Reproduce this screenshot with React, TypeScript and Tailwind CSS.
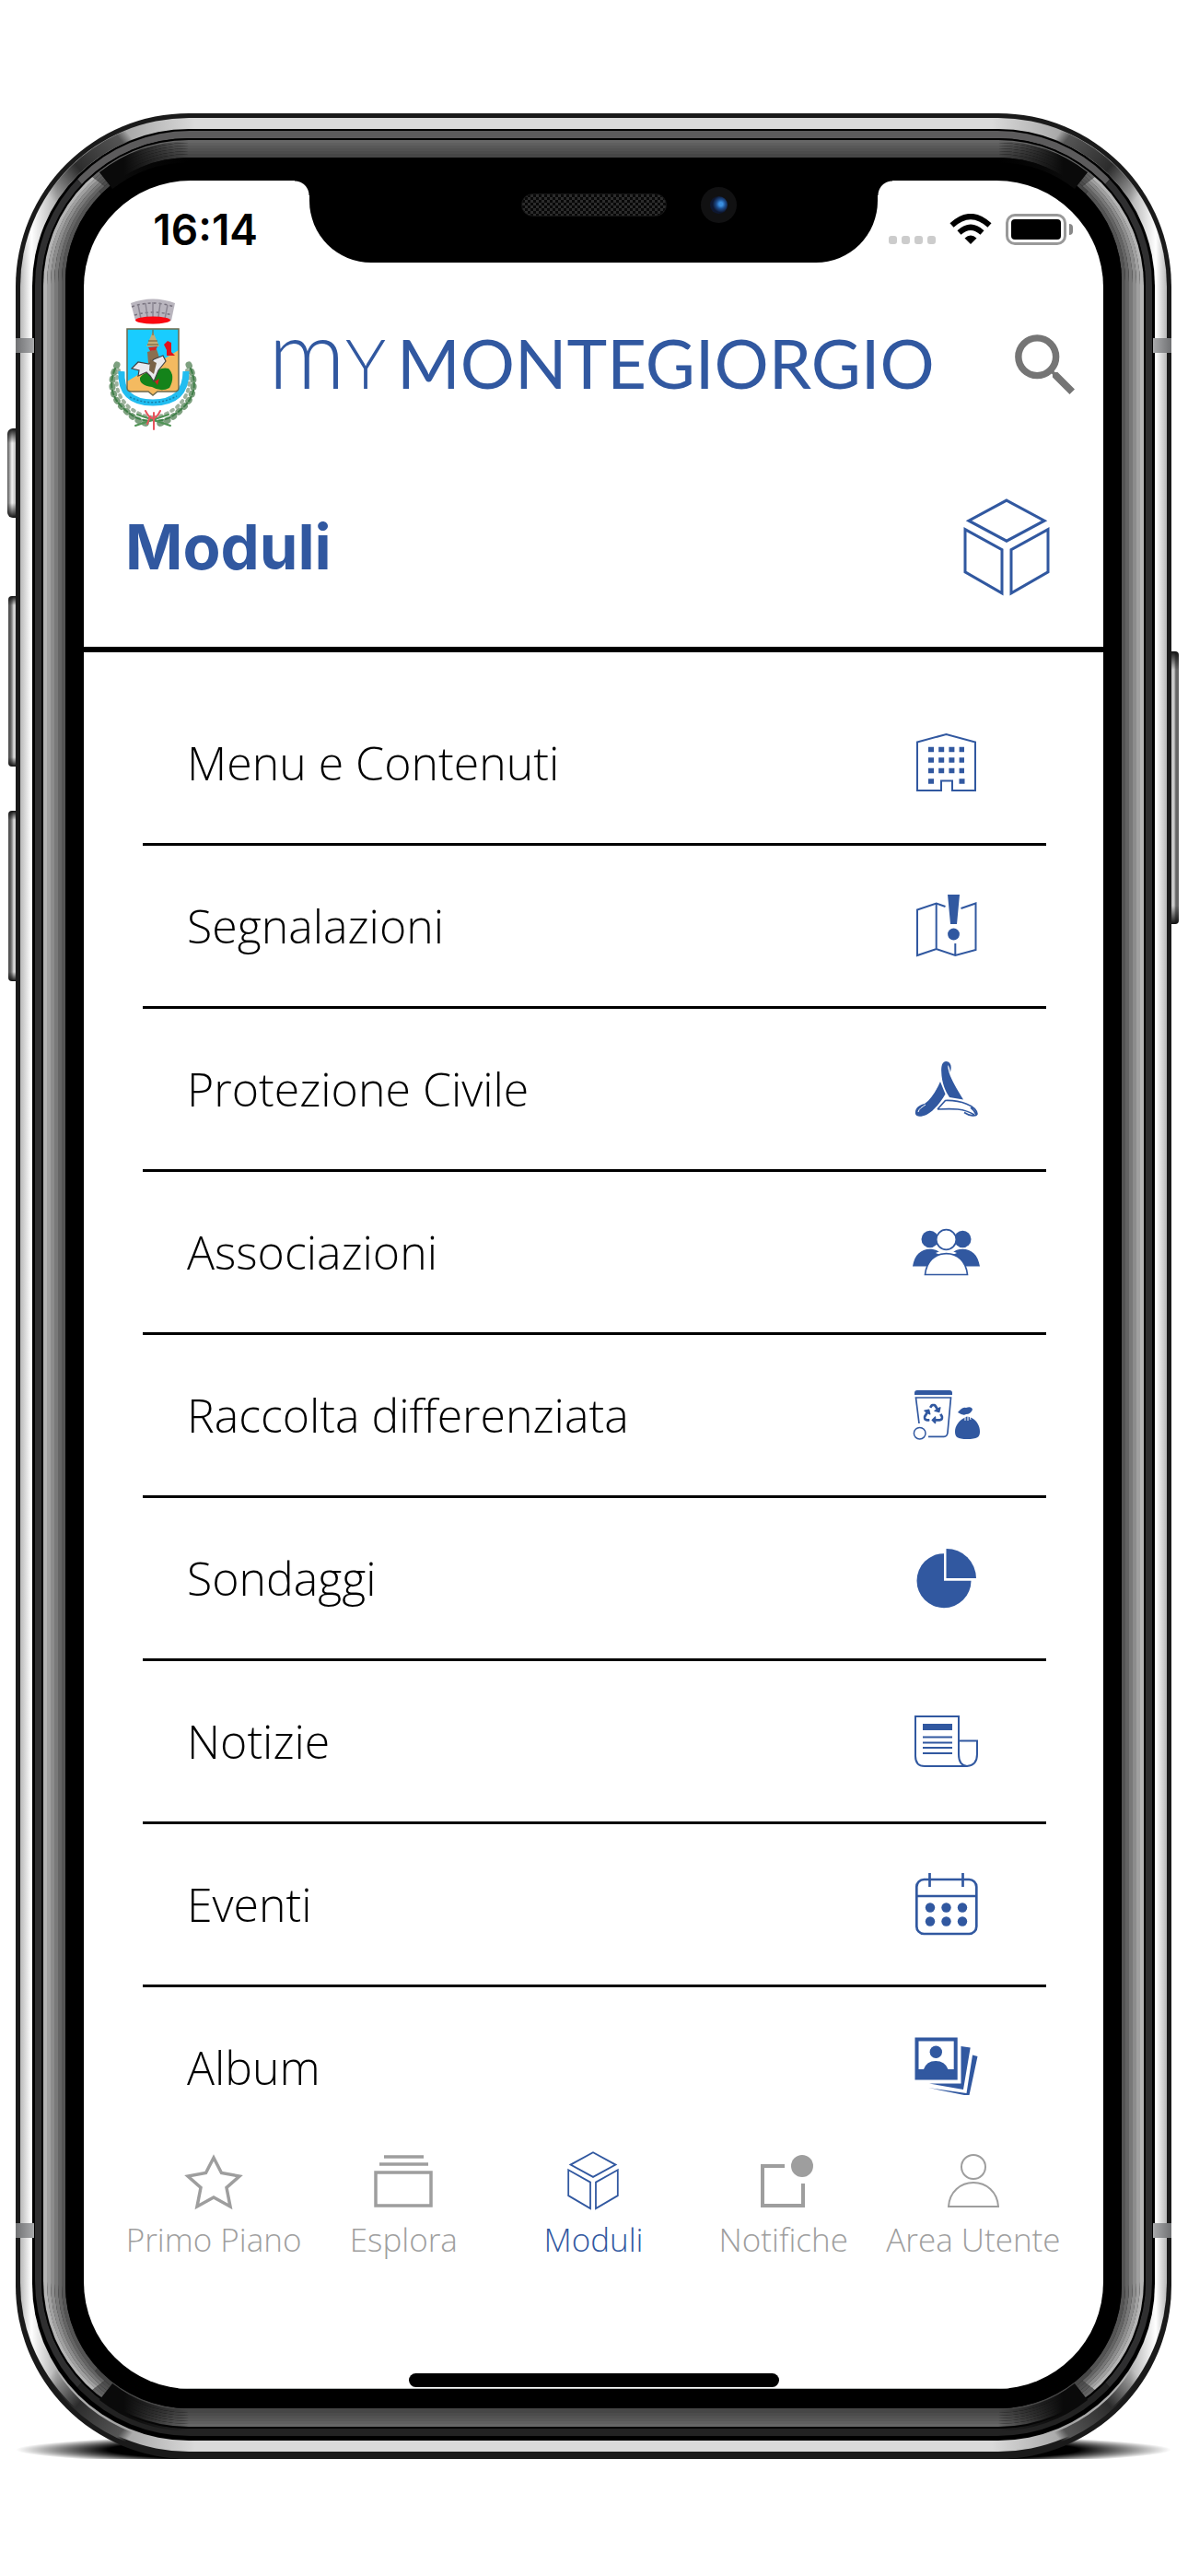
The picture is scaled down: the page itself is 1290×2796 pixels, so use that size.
import {useState} from "react";
import type {ReactNode} from "react";
import {MdSearch} from "react-icons/md";
import {FaRecycle} from "react-icons/fa";

// metal rings of the phone body, from the outside in
const RINGS=[
  "rounded-[188px] bg-[#1a1a1a] px-[5px] pt-[5px] pb-2",
  "rounded-[183px] bg-[linear-gradient(to_right,#b8b8b8,#fff_12px,#b0b0b0_40px,#a4a4a4_110px,#dadada_190px,#dadada_calc(100%-190px),#a4a4a4_calc(100%-110px),#b0b0b0_calc(100%-40px),#fff_calc(100%-12px),#b8b8b8)] px-[13px] py-3",
  "rounded-[170px] bg-black px-[3px] pt-[2px] pb-[5px]",
  "rounded-[168px] border-x-[7px] border-y-8 border-x-[#2f2f30] border-t-[#5c5b5c] border-b-[#222222]",
  "rounded-[160px] bg-black p-[2px]",
  "rounded-[158px] border-x-4 border-y-[3px] border-x-[#b4b4b4] border-y-[#666666]",
  "rounded-[154px] border-x-4 border-y-[3px] border-x-[#a0a0a0] border-y-[#5f5f5f]",
  "rounded-[150px] border-x-4 border-y-[3px] border-x-[#8c8c8c] border-y-[#585858]",
  "rounded-[146px] border-x-4 border-y-[3px] border-x-[#787878] border-y-[#525252]",
  "rounded-[142px] border-x-4 border-y-[3px] border-x-[#646464] border-y-[#4c4c4c]",
  "rounded-[138px] border-x-4 border-t-4 border-b-[5px] border-x-[#545454] border-y-[#464646]",
  "rounded-[134px] bg-black px-5 pt-[25px] pb-[21px]",
];

function CubeIcon({className, thick}: {className: string; thick: number}) {
  return (
    <svg viewBox="0 1 94 101" preserveAspectRatio="none" fill="none" stroke="currentColor" strokeWidth={thick} className={className}>
      <path d="M47 3 88 24 47 45 6 24zM2 33 42 54V99L2 77zM92 33 52 54V99L92 77z" />
    </svg>
  );
}

function ModuleIcon({children}: {children: ReactNode}) {
  return (
    <svg viewBox="0 0 72 72" fill="none" stroke="currentColor" strokeWidth="2" className="size-[72px] shrink-0 overflow-visible text-[#3158a0]">
      {children}
    </svg>
  );
}

const MODULES=[
  {
    name: "Menu e Contenuti",
    icon: (
      <>
        <path d="M4 13.5 35.5 5 67 13.5V66H42V55.5H30V66H4z" />
        <path d="M16 21.5h39M16 33h39M16 44.5h39" strokeWidth="5.5" strokeDasharray="6 5.2" />
        <path d="M16 56h6M49.5 56h6" strokeWidth="5.5" />
      </>
    ),
  },
  {
    name: "Segnalazioni",
    icon: (
      <>
        <path d="M34.5 15 24.7 11.5 4 18.5V68L24.7 61 45.3 68 67.5 62V11.5L51.5 17M24.7 11.5V61M45.3 55V68" />
        <path d="M37 2H50L47 34H40z" fill="currentColor" stroke="none" />
        <circle cx="43.5" cy="45" r="6.4" fill="currentColor" stroke="none" />
      </>
    ),
  },
  {
    name: "Protezione Civile",
    icon: (
      <>
        <path d="M35.5 6C31 6 30 11 30.2 17 30.5 30 35 39 39 45L54 47.5C47 36 41.5 27 38.5 18 37.5 14 37 12 37.3 10 39 12 39.5 15 39.8 18 41.5 13 41.5 7 35.5 6z" fill="currentColor" stroke="none" />
        <path d="M29 28 34.5 41.5C29 51 22 60 14 64 8 66.5 3 66.5 2 63 1 57 6 53.5 12 52 19 47 24 39 29 28z" fill="currentColor" stroke="none" />
        <path d="M5 61C6 57 9 56 13 53" stroke="white" strokeWidth="1" />
        <path d="M26 58 34.5 48.5C51 48 68 54 69 63 68 66 61 65.5 55 61.5M26 58C42 57 55 57 66 64M62 56C66 59 67 61 68 64" strokeWidth="1.7" />
      </>
    ),
  },
  {
    name: "Associazioni",
    icon: (
      <>
        <g fill="currentColor" stroke="none">
          <circle cx="17.7" cy="22" r="9.2" />
          <circle cx="53.3" cy="22" r="9.2" />
          <path d="M-1 51.5C1 39 8 32.7 17.7 32.7 27 32.7 34 38 36 51.5zM35 51.5C37 38 44 32.7 53.3 32.7 63 32.7 70 39 72 51.5z" />
        </g>
        <path d="M24 37Q35.5 30 47 37L40 40H31z" fill="white" stroke="none" />
        <circle cx="35.5" cy="22.5" r="10.8" fill="white" strokeWidth="1.7" />
        <path d="M12.5 60.5C14 46 23 37.7 35.5 37.7 48 37.7 57 46 58.5 60.5z" fill="white" strokeWidth="1.7" />
      </>
    ),
  },
  {
    name: "Raccolta differenziata",
    icon: (
      <>
        <path d="M1 14V12Q1 9 4 9H39Q42 9 42 12V14z" fill="currentColor" stroke="none" />
        <path d="M6 45 2.5 17H40.5L37 55Q36.5 59.3 33 59.3H16" strokeWidth="1.7" />
        <circle cx="6.7" cy="55.7" r="6.3" strokeWidth="1.5" />
        <FaRecycle x="10.5" y="23.5" size={22} stroke="none" />
        <path d="M48 33Q53 27 57 28 63 26 64 30 62 35 57 35 54 37 48 33zM55 39Q58 36 63 39C69 42 72 48 72 54 72 60 69 62 58 62 48 62 45 60 45 54 45 48 49 42 55 39z" fill="currentColor" stroke="none" />
        <path d="M56 42V37M59 42V36M62 41 61 37" stroke="white" strokeWidth="1" />
      </>
    ),
  },
  {
    name: "Sondaggi",
    icon: (
      <g fill="currentColor" stroke="none">
        <path d="M33 9.2V38.7H62.5A29.5 29.5 0 1 1 33 9.2z" />
        <path d="M35.5 4V36H68A32.3 32.3 0 0 0 35.5 4z" />
      </g>
    ),
  },
  {
    name: "Notizie",
    icon: (
      <>
        <path d="M49 35.5V9H2V52Q2 63 12 63H58Q69 62 69 50V35.5H49V50Q49 62 58 63" />
        <path d="M10 20.5H42" strokeWidth="7" />
        <path d="M10 31.5H42M10 37.5H42M10 43H42M10 49H42" />
      </>
    ),
  },
  {
    name: "Eventi",
    icon: (
      <>
        <rect x="3.3" y="9" width="65" height="59" rx="8" strokeWidth="2.7" />
        <path d="M3 27H68M17.5 2V17M53.5 2V17" strokeWidth="2.7" />
        <g fill="currentColor" stroke="none">
          <circle cx="18" cy="39.5" r="5.2" />
          <circle cx="35.5" cy="39.5" r="5.2" />
          <circle cx="53" cy="39.5" r="5.2" />
          <circle cx="18" cy="54.5" r="5.2" />
          <circle cx="35.5" cy="54.5" r="5.2" />
          <circle cx="53" cy="54.5" r="5.2" />
        </g>
      </>
    ),
  },
  {
    name: "Album",
    icon: (
      <g fill="currentColor" stroke="none">
        <path fillRule="evenodd" d="M1.5 3.5H47.7V49.5H1.5zM5.5 7.5V38H11Q14 29 24 29T37.5 38H43.7V7.5z" />
        <circle cx="24.3" cy="19.3" r="6.7" />
        <path d="M51.5 13 61.7 14.5 54 60 17 53.5H51.5z" />
        <path d="M64 22.5 69.5 24 60.5 66H55L16 58 57.5 64z" />
      </g>
    ),
  },
];

const TABS=[
  {
    name: "Primo Piano",
    icon: (
      <svg viewBox="0 0 64 64" fill="none" stroke="currentColor" strokeWidth="3.5" className="size-16">
        <path d="M32 7 40.5 23.5 60 27 46 39.5 50 60 32 50 14 60 18 39.5 4 27 23.5 23.5z" />
      </svg>
    ),
  },
  {
    name: "Esplora",
    icon: (
      <svg viewBox="0 0 64 64" fill="none" stroke="currentColor" strokeWidth="3.5" className="size-16">
        <path d="M11 6H54M6 14H59M2 23H62V59H2z" />
      </svg>
    ),
  },
  {name: "Moduli", icon: <CubeIcon className="h-16 w-14" thick={3} />},
  {
    name: "Notifiche",
    icon: (
      <svg viewBox="0 0 64 64" fill="none" stroke="currentColor" strokeWidth="4" className="size-16">
        <path d="M33 16H9V59H53V35" />
        <circle cx="52" cy="16" r="12" fill="currentColor" stroke="none" />
      </svg>
    ),
  },
  {
    name: "Area Utente",
    icon: (
      <svg viewBox="0 0 64 64" fill="none" stroke="currentColor" strokeWidth="2" className="size-16">
        <circle cx="32" cy="17" r="13" />
        <path d="M5 60C6 44 18 34 32 34S58 44 59 60z" />
      </svg>
    ),
  },
];

function Crest() {
  return (
    <svg viewBox="0 0 98 144" className="h-36 w-[98px]" role="img" aria-label="Stemma di Montegiorgio">
      {/* crown */}
      <path d="M25 5Q49-4 73 5L69 24Q49 31 30 24z" fill="#b9b5be" />
      <path d="M26 9Q49 1 72 9M29 18Q49 12 70 18" fill="none" stroke="#77727e" strokeWidth="1.5" strokeDasharray="3 3" />
      <path d="M33 7 36 22M41 5 43 20M49 4V20M57 5 55 20M65 7 62 22" stroke="#8b8692" strokeWidth="1.5" />
      <ellipse cx="49" cy="23.5" rx="19" ry="4" fill="#fb0610" />
      {/* laurel and oak branches */}
      <g fill="none" strokeLinecap="round">
        <path d="M10 72Q-4 102 20 122 34 136 47 136M88 72Q102 102 78 122 64 136 51 136" stroke="#7da07f" strokeWidth="7" strokeDasharray="1 7" />
        <path d="M8 76Q-3 102 18 120 34 135 50 132M90 76Q101 102 80 120 64 135 48 132" stroke="#3f7f48" strokeWidth="2" strokeDasharray="5 3" />
        <path d="M12 78Q4 100 23 118 38 129 49 129M86 78Q94 100 75 118 60 129 49 129" stroke="#9db19c" strokeWidth="4" strokeDasharray="2 5" />
        <path d="M30 138 66 126M68 138 32 126" stroke="#4f9355" strokeWidth="2" />
        <path d="M41 122Q49 138 57 122M50 124V142M43 136 46 128" stroke="#e8545c" strokeWidth="2" />
      </g>
      {/* ribbon */}
      <path d="M15 79Q13 113 49 113T85 79" fill="none" stroke="#22bdf0" strokeWidth="7" />
      <path d="M24 107Q49 119 75 106" fill="none" stroke="#1a7fa8" strokeWidth="1.5" strokeDasharray="2 2" />
      {/* shield */}
      <path d="M21 33H77V97Q77 101 72 101H54L49 105 44 101H26Q21 101 21 97z" fill="#f4ba60" />
      <path d="M21 33H77V56L21 90z" fill="#19ccff" />
      <path d="M49 36 42 52H56z" fill="#c3ad78" />
      <path d="M49 34V40M44 46H54M43 50H55" stroke="#6d5a38" strokeWidth="1" />
      <path d="M35 86Q40 78 50 82 56 74 66 76 74 84 67 97 58 102 48 96 34 94 35 86z" fill="#14831a" />
      <path d="M43 58 53 55 56 64 54 80 46 84 44 70z" fill="#8a6f50" />
      <path d="M44 53 54 52 52 56 46 57z" fill="#d22a24" />
      <path d="M26 76 33 69 45 71 50 66 60 62 63 68 55 78 50 90 46 84 42 80 33 84 34 78z" fill="#e9e9ee" stroke="#444" strokeWidth="1.2" />
      <path d="M46 66 53 70 50 82 45 78z" fill="#7a6248" />
      <path d="M65 46 69 48V58L73 62H64V56L61 50z" fill="#e0121b" />
      <path d="M51 90 56 87 54 94z" fill="#d02020" />
      <path d="M21 33H77V97Q77 101 72 101H54L49 105 44 101H26Q21 101 21 97z" fill="none" stroke="#6e6a4c" strokeWidth="1.5" />
    </svg>
  );
}

// dark reflections where the metal bends
function Glare({id, className}: {id: string; className: string}) {
  return (
    <svg viewBox="0 0 200 200" fill="none" className={`pointer-events-none absolute size-[200px] ${className}`} aria-hidden="true">
      <defs>
        <linearGradient id={`${id}-outer`} gradientUnits="userSpaceOnUse" x1="38" y1="92" x2="124" y2="24">
          <stop offset="0" stopColor="#2c2c2c" stopOpacity="0" />
          <stop offset="0.4" stopColor="#2c2c2c" />
          <stop offset="0.9" stopColor="#555555" />
          <stop offset="1" stopColor="#555555" stopOpacity="0" />
        </linearGradient>
        <linearGradient id={`${id}-inner`} gradientUnits="userSpaceOnUse" x1="100" y1="0" x2="188" y2="0">
          <stop offset="0.2" stopColor="#0a0a0a" />
          <stop offset="1" stopColor="#0a0a0a" stopOpacity="0" />
        </linearGradient>
      </defs>
      <path d="M38 94.5A176.5 176.5 0 0 1 125 23.1" stroke={`url(#${id}-outer)`} strokeWidth="12" />
      <path d="M98 73A146 146 0 0 1 188 42" stroke={`url(#${id}-inner)`} strokeWidth="23" />
    </svg>
  );
}

function StatusBar() {
  return (
    <div className="grid h-[89px] grid-cols-[1fr_617px_1fr]">
      <div className="flex justify-end pt-[27px] pr-14">
        <time className="text-[46px] leading-[52px] font-semibold">16:14</time>
      </div>
      <div className="relative flex items-start rounded-b-[67px] bg-black pt-[7px] pl-[230px]">
        <span className="absolute top-0 -left-4 size-4 bg-[radial-gradient(circle_at_0_100%,transparent_15px,black_16px)]" />
        <span className="absolute top-0 -right-4 size-4 bg-[radial-gradient(circle_at_100%_100%,transparent_15px,black_16px)]" />
        <div className="flex items-center gap-[37px]">
          <span className="h-[25px] w-[158px] rounded-full border border-[#161616] bg-[repeating-conic-gradient(#2c2c2c_0_25%,#080808_0_50%)] bg-size-[6px_6px]" />
          <span className="flex size-[39px] items-center justify-center rounded-full bg-[#111112]">
            <span className="size-[19px] rounded-full bg-[radial-gradient(circle_at_62%_45%,#3b8fe0_2px,#1d4c8c_5px,#0e1730_9px)]" />
          </span>
        </div>
      </div>
      <div className="flex items-start justify-end gap-[15px] pt-9 pr-[33px]">
        <span className="flex gap-[5px] pt-6">
          <i className="size-[9px] rounded-[3px] bg-[#cccccc]" />
          <i className="size-[9px] rounded-[3px] bg-[#cccccc]" />
          <i className="size-[9px] rounded-[3px] bg-[#cccccc]" />
          <i className="size-[9px] rounded-[3px] bg-[#cccccc]" />
        </span>
        <svg viewBox="0 0 46 34" className="h-[34px] w-[46px]">
          <path d="M23 33 16.5 26.5Q23 20.5 29.5 26.5z" />
          <path d="M10.5 20.5Q23 9 35.5 20.5M2.5 12.5Q23-6.5 43.5 12.5" fill="none" stroke="black" strokeWidth="6" />
        </svg>
        <span className="flex items-center gap-[3px]">
          <span className="h-[34px] w-[66px] rounded-[10px] border-[3px] border-[#999999] p-[3px]">
            <span className="block h-full rounded-[4px] bg-black" />
          </span>
          <span className="h-3 w-1 rounded-r-full bg-[#888888]" />
        </span>
      </div>
    </div>
  );
}

function Screen() {
  const [tab, setTab]=useState("Moduli");

  return (
    <div className="overflow-hidden rounded-[116px] bg-white font-[Inter,sans-serif] text-black">
      <StatusBar />

      <header className="flex items-center justify-between pt-[39px] pr-[18px] pl-[26px]">
        <Crest />
        <div className="flex items-baseline pb-4 font-[Lato,sans-serif] text-[74px] leading-[80px] text-[#3158a0]">
          <span className="text-[104px] font-light">m</span>
          <span className="pr-3 font-light">Y</span>
          <span>MONTEGIORGIO</span>
        </div>
        <button type="button" aria-label="Cerca" className="text-[#757575]">
          <MdSearch size={89} />
        </button>
      </header>

      <div className="flex items-center justify-between border-b-[6px] border-black pt-[73px] pr-[58px] pb-[55px] pl-[45px]">
        <h1 className="font-['Inter',sans-serif] text-[67px] leading-[84px] font-bold text-[#3158a0]">Moduli</h1>
        <CubeIcon className="h-[106px] w-[94px] text-[#3158a0]" thick={3} />
      </div>

      <ul className="mt-[33px] pr-[62px] pl-16 font-['Open_Sans',sans-serif] text-[50px] leading-[64px] font-light [font-variant-ligatures:none]">
        {MODULES.map((m)=>(
          <li key={m.name} className="border-b-[3px] border-black last:border-b-0">
            <a href="#" className="flex h-[174px] items-center justify-between pr-[72px] pl-12">
              {m.name}
              <ModuleIcon>{m.icon}</ModuleIcon>
            </a>
          </li>
        ))}
      </ul>

      <nav className="grid grid-cols-5 px-[38px] pt-1 font-['Open_Sans',sans-serif] text-[35px] leading-[48px] font-light">
        {TABS.map((t)=>(
          <button
            key={t.name}
            type="button"
            onClick={()=>setTab(t.name)}
            className={`flex flex-col items-center gap-2 whitespace-nowrap ${tab===t.name ? "text-[#3158a0]" : "text-[#9e9e9e]"}`}
          >
            {t.icon}
            {t.name}
          </button>
        ))}
      </nav>

      <div className="mx-auto mt-[121px] h-[15px] w-[402px] rounded-full bg-black" />
      <div className="mt-px h-px bg-[#b5b9b8]" />
    </div>
  );
}

export default function App() {
  const body=RINGS.reduceRight<ReactNode>(
    (inner, ring)=><div className={ring}>{inner}</div>,
    <Screen />
  );

  return (
    <div className="min-h-screen bg-white pt-[123px] pb-[126px]">
      <div className="relative mr-[18px] ml-[17px]">
        {/* shadow on the table */}
        <div className="absolute inset-x-0 bottom-0 h-8 overflow-hidden">
          <div className="h-11 bg-[radial-gradient(closest-side,black_84%,transparent)]" />
        </div>

        {/* side buttons */}
        <span className="absolute top-[342px] -left-[9px] h-[97px] w-3 rounded-l-md bg-[linear-gradient(#111,transparent_16px,transparent_calc(100%-16px),#111),linear-gradient(to_right,#555,#f2f2f2_5px,#999)]" />
        <span className="absolute top-[524px] -left-2 h-[185px] w-3 rounded-l-sm bg-[linear-gradient(#111,transparent_10px,transparent_calc(100%-10px),#111),linear-gradient(to_right,#555_2px,#888_4px,#ddd_6px,#999)]" />
        <span className="absolute top-[757px] -left-2 h-[185px] w-3 rounded-l-sm bg-[linear-gradient(#111,transparent_10px,transparent_calc(100%-10px),#111),linear-gradient(to_right,#555_2px,#888_4px,#ddd_6px,#999)]" />
        <span className="absolute top-[584px] -right-2 h-[296px] w-3 rounded-r-sm bg-[linear-gradient(#111,transparent_20px,transparent_calc(100%-20px),#111),linear-gradient(to_left,#666_3px,#888_4px,#ccc_5px,#bbb)]" />

        <div className="relative">{body}</div>

        {/* antenna bands */}
        <span className="absolute top-[244px] left-0 h-4 w-5 bg-linear-to-r from-[#707173] to-[#a9aaac]" />
        <span className="absolute top-[244px] right-0 h-4 w-5 bg-linear-to-l from-[#707173] to-[#a9aaac]" />
        <span className="absolute bottom-[240px] left-0 h-4 w-5 bg-linear-to-r from-[#707173] to-[#a9aaac]" />
        <span className="absolute right-0 bottom-[240px] h-4 w-5 bg-linear-to-l from-[#707173] to-[#a9aaac]" />

        <Glare id="glare-tl" className="top-0 left-0" />
        <Glare id="glare-tr" className="top-0 right-0 -scale-x-100" />
        <Glare id="glare-bl" className="bottom-0 left-0 -scale-y-100" />
        <Glare id="glare-br" className="right-0 bottom-0 -scale-100" />
      </div>
    </div>
  );
}
